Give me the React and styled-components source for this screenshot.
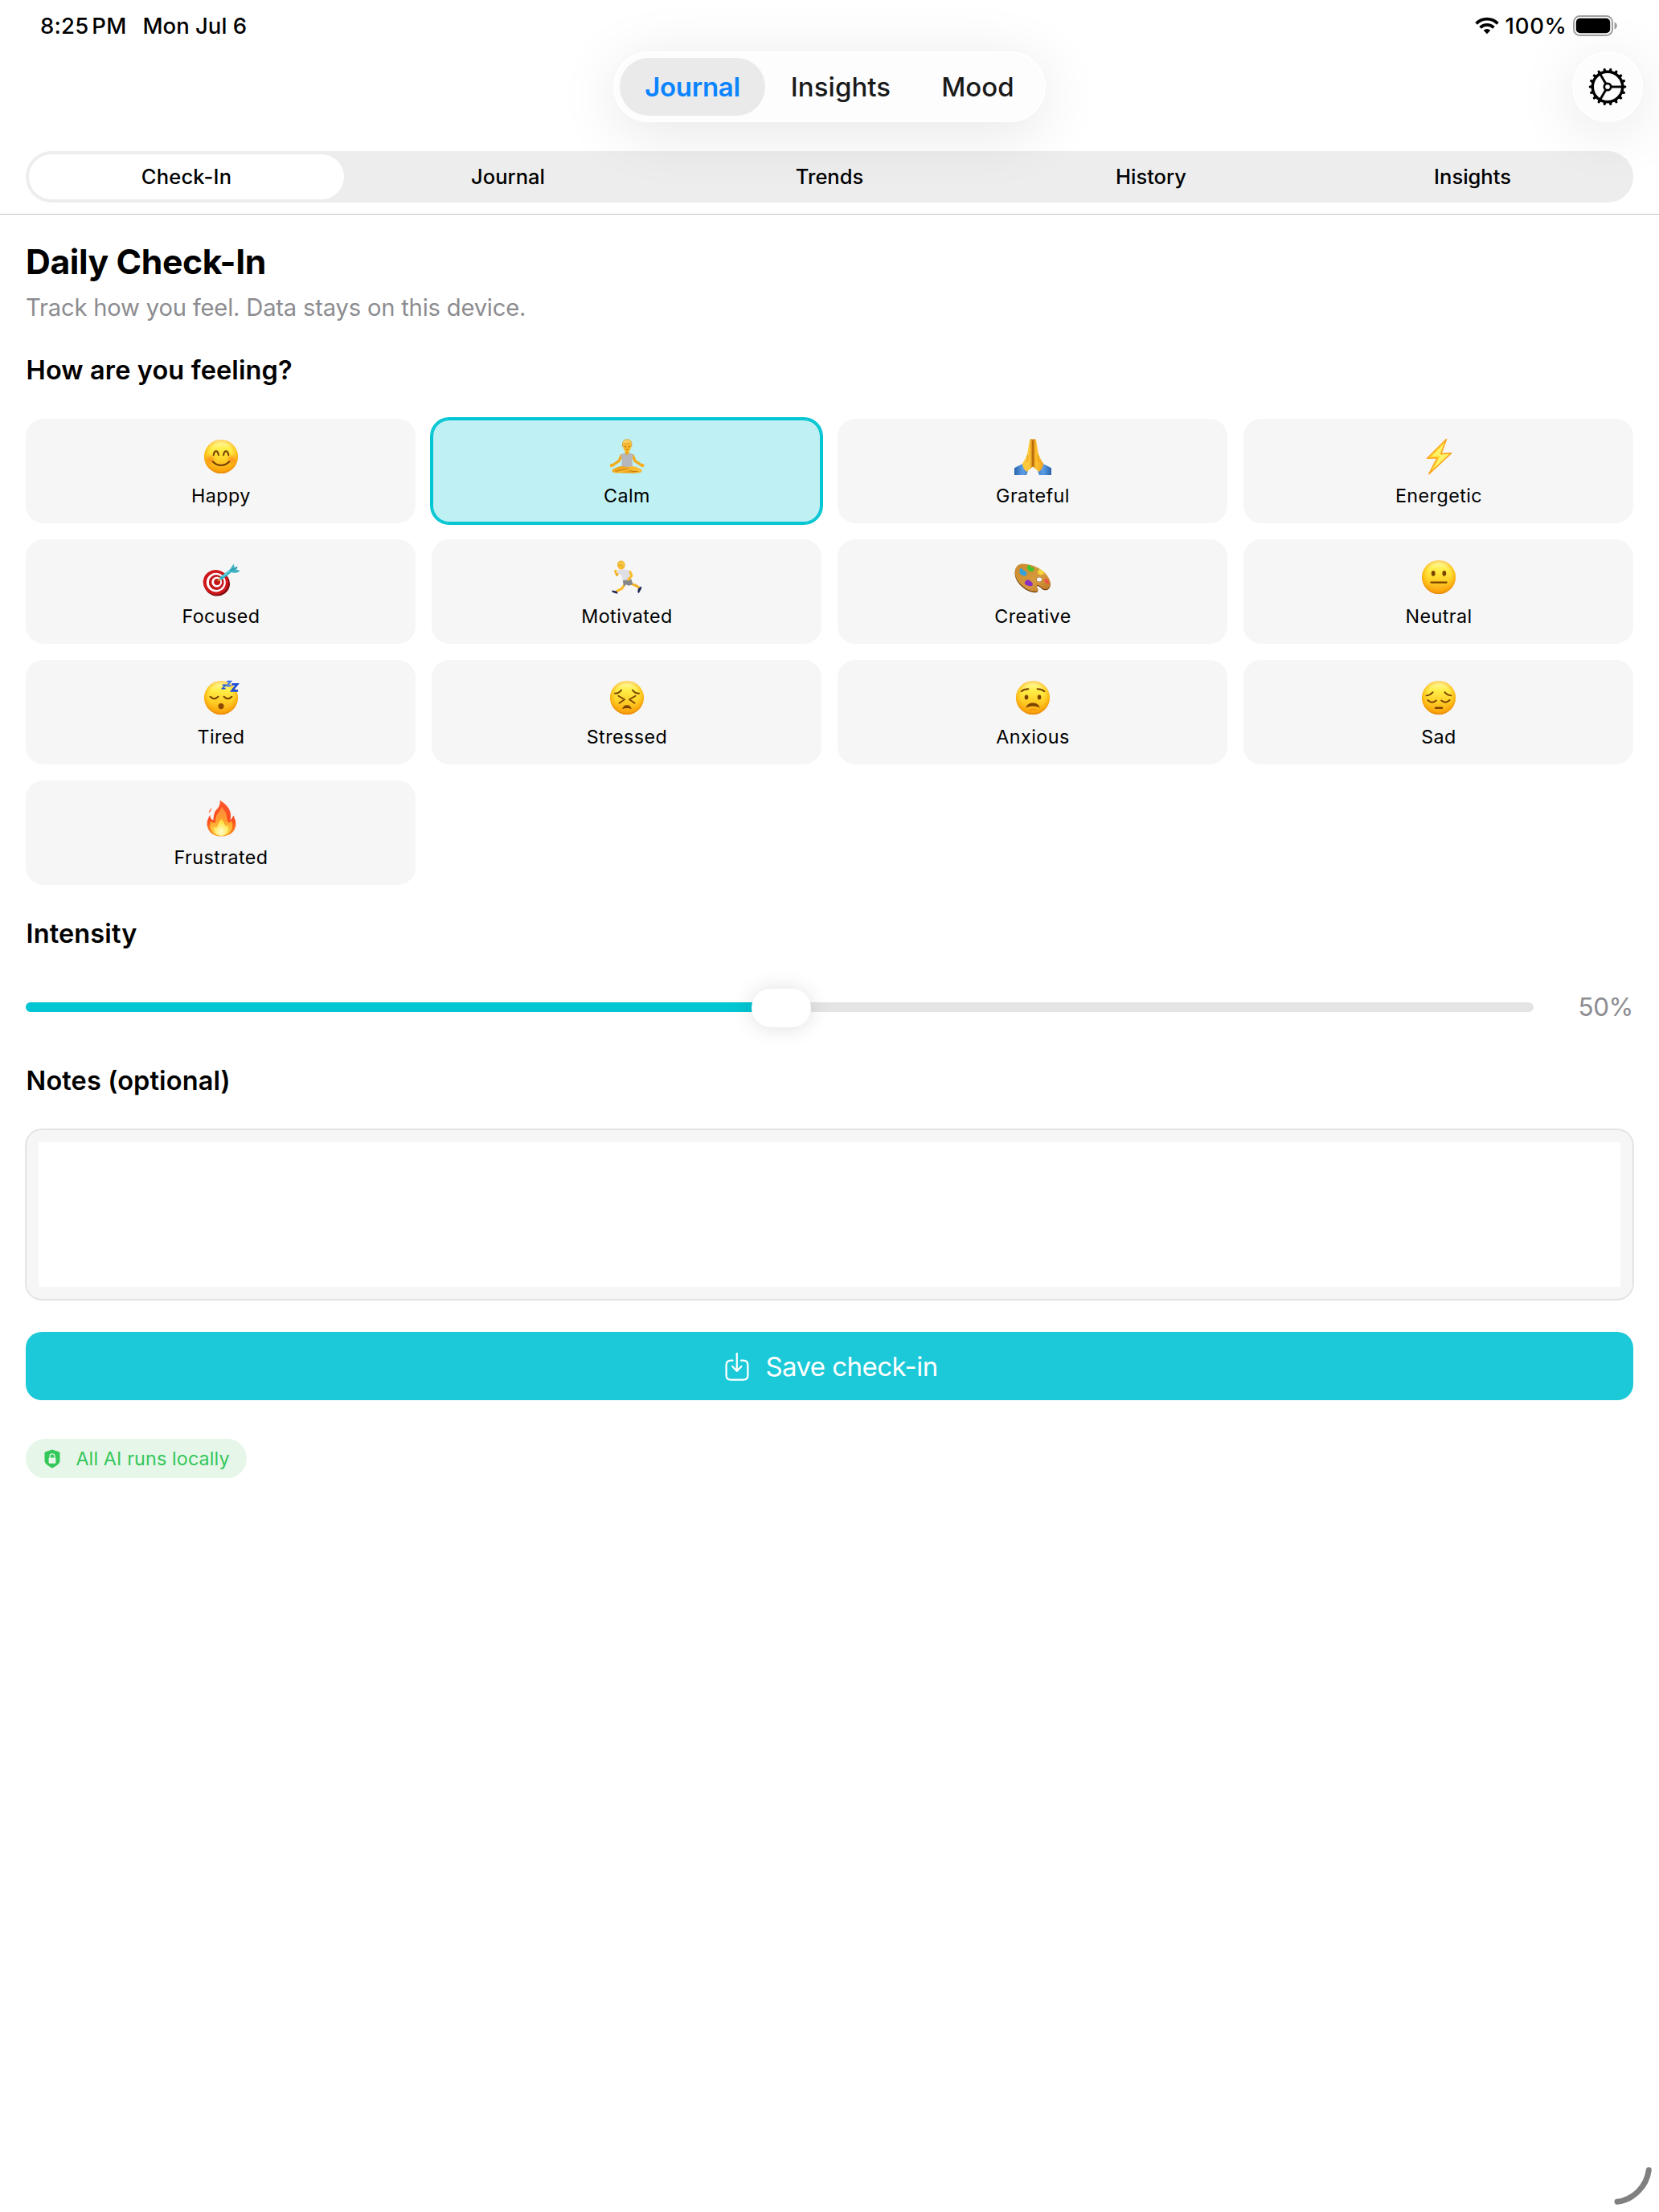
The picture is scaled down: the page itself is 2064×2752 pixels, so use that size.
import React, { useId } from "react";
import styled, { createGlobalStyle, css } from "styled-components";

const teal = "#00c5d2";
const ink = "#000";
const muted = "#8c8c90";
const card = "#f6f6f6";

const GlobalStyle = createGlobalStyle`
  *, *::before, *::after { box-sizing: border-box; }
  body { margin: 0; background: #fff; }
  button { font: inherit; border: 0; padding: 0; background: none; color: inherit; }
`;

const Screen = styled.div`
  position: relative;
  width: 2064px;
  height: 2752px;
  overflow: hidden;
  background: #fff;
  color: ${ink};
  font-family: Inter, "Liberation Sans", sans-serif;
  white-space: nowrap;
`;

const StatusBar = styled.div`
  display: flex;
  justify-content: space-between;
  height: 64px;
  padding: 0 52px 0 50px;
  font-size: 27.5px;
  font-weight: 480;
  line-height: 64px;
`;

const StatusGroup = styled.div`
  display: flex;
  align-items: center;
  gap: ${(p) => p.$gap}px;
`;

const Clock = styled.span`
  letter-spacing: 0.2px;
  word-spacing: -3.6px;
`;

const Percent = styled.span`
  letter-spacing: 0.7px;
`;

const NavBar = styled.nav`
  position: relative;
  z-index: 1;
  display: grid;
  grid-template-columns: 1fr auto 1fr;
  height: 88px;
  padding: 0 20px;
`;

const glass = css`
  background: #fdfdfd;
  box-shadow: inset 0 0 0 2px #fff, 0 12px 76px rgba(0, 0, 0, 0.1);
`;

const TabPill = styled.div`
  grid-column: 2;
  display: flex;
  width: 538px;
  padding: 8px;
  border-radius: 44px;
  ${glass}
`;

const Tab = styled.button`
  width: ${(p) => p.$width}px;
  height: 72px;
  border-radius: 36px;
  font-size: 33px;
  font-weight: ${(p) => (p.$active ? 580 : 480)};
  letter-spacing: ${(p) => (p.$active ? "-0.3px" : "0.05px")};
  line-height: 72px;
  color: ${(p) => (p.$active ? "#0a84ff" : "#1a1a1a")};
  background: ${(p) => (p.$active ? "#eaeaea" : "transparent")};
`;

const GearButton = styled.button`
  justify-self: end;
  display: flex;
  align-items: center;
  justify-content: center;
  width: 88px;
  height: 88px;
  border-radius: 50%;
  ${glass}
`;

const SegmentBar = styled.div`
  padding: 36px 32px 14px;
  border-bottom: 1px solid #c4c4c6;
`;

const Segments = styled.div`
  display: grid;
  grid-template-columns: repeat(5, 1fr);
  height: 64px;
  border-radius: 32px;
  background: #ededed;
`;

const Segment = styled.button`
  margin: 4px;
  border-radius: 28px;
  font-size: 25.5px;
  font-weight: ${(p) => (p.$active ? 550 : 470)};
  letter-spacing: ${(p) => (p.$active ? "0.2px" : "0")};
  line-height: 56px;
  background: ${(p) => (p.$active ? "#fff" : "transparent")};
`;

const Content = styled.main`
  display: flex;
  flex-direction: column;
  padding: 32px 32px 0;
`;

const Title = styled.h1`
  margin: 0;
  font-size: 42.7px;
  font-weight: 700;
  letter-spacing: -0.4px;
  line-height: 53px;
`;

const Subtitle = styled.p`
  margin: 12px 0 0;
  font-size: 29.2px;
  letter-spacing: -0.2px;
  line-height: 37px;
  color: ${muted};
`;

const Heading = styled.h2`
  margin: ${(p) => p.$top}px 0 0;
  padding-left: 0.6px;
  font-size: 32.5px;
  font-weight: 580;
  letter-spacing: 0.12px;
  line-height: 38px;
`;

const MoodGrid = styled.div`
  display: grid;
  grid-template-columns: repeat(4, 1fr);
  gap: 20px;
  margin-top: 41px;
`;

const MoodCard = styled.button`
  display: flex;
  flex-direction: column;
  align-items: center;
  gap: 10px;
  height: 130px;
  padding-top: 23px;
  border-radius: 22px;
  background: ${(p) => (p.$selected ? "#bff0f4" : card)};
  box-shadow: ${(p) =>
    p.$selected ? `0 0 0 2px ${teal}, inset 0 0 0 2px ${teal}` : "none"};
`;

const MoodLabel = styled.span`
  padding-left: 1px;
  font-size: 23.3px;
  letter-spacing: 0.45px;
  line-height: 30px;
`;

const SliderRow = styled.div`
  display: flex;
  align-items: center;
  justify-content: space-between;
  height: 48px;
  margin-top: 48px;
`;

const Track = styled.div`
  position: relative;
  width: 1876px;
  height: 12px;
  border-radius: 6px;
  background: #e4e4e5;
`;

const TrackFill = styled.div`
  height: 12px;
  border-radius: 6px;
  background: ${teal};
`;

const Thumb = styled.div`
  position: absolute;
  top: -17px;
  width: 74px;
  height: 48px;
  border-radius: 24px;
  background: #fff;
  box-shadow: 0 1px 26px rgba(0, 0, 0, 0.13);
`;

const SliderValue = styled.span`
  font-size: 31.4px;
  letter-spacing: -0.4px;
  line-height: 48px;
  color: ${muted};
`;

const NotesBox = styled.div`
  height: 212px;
  margin-top: 41px;
  padding: 16px;
  border-radius: 20px;
  background: ${card};
  box-shadow: 0 0 0 1px #e6e6e7, inset 0 0 0 1px #e0e0e1;
`;

const NotesInput = styled.textarea`
  display: block;
  width: 100%;
  height: 100%;
  border: 0;
  padding: 16px;
  resize: none;
  background: #fff;
  font: inherit;
`;

const SaveButton = styled.button`
  display: flex;
  align-items: center;
  justify-content: center;
  gap: 20px;
  height: 85px;
  margin-top: 40px;
  padding: 1px 0 0 5px;
  border-radius: 20px;
  background: #1cc9d8;
  color: #fff;
  font-size: 33px;
  letter-spacing: -0.55px;
`;

const Badge = styled.div`
  display: flex;
  align-items: center;
  gap: 19.4px;
  width: 275px;
  height: 49px;
  margin-top: 48px;
  padding-left: 23px;
  border-radius: 25px;
  background: #e6f6e9;
  color: #34c759;
  font-size: 23.3px;
  letter-spacing: 0.14px;
`;

const CornerMark = styled.svg`
  position: absolute;
  right: 6px;
  bottom: 6px;
`;

/* ---------- interface icons ---------- */

const WifiIcon = () => (
  <svg width="30" height="22" viewBox="0 0 30 22" fill="none" stroke="#000">
    <path d="M1.6 8.4A18.6 18.6 0 0 1 28.4 8.4" strokeWidth="3.8" />
    <path d="M6.6 13.4A11.8 11.8 0 0 1 23.4 13.4" strokeWidth="3.8" />
    <path d="M15 21.2L10.7 16.8A6.2 6.2 0 0 1 19.3 16.8Z" fill="#000" stroke="none" />
  </svg>
);

const BatteryIcon = () => (
  <svg width="55" height="26" viewBox="0 0 55 26">
    <rect x="1" y="1" width="48" height="24" rx="7.5" fill="none" stroke="#a0a0a0" strokeWidth="2" />
    <rect x="3.8" y="3.8" width="42.4" height="18.4" rx="5" fill="#000" />
    <path d="M51.5 8.6Q54.8 9.8 54.8 13T51.5 17.4Z" fill="#a0a0a0" />
  </svg>
);

const GearIcon = () => (
  <svg width="50" height="50" viewBox="-25 -25 50 50" fill="none" stroke="#000">
    {Array.from({ length: 18 }, (_, i) => (
      <path key={i} d="M18.5 -2.3L22.9 -1.3Q23.7 0 22.9 1.3L18.5 2.3Z" fill="#000" stroke="none" transform={`rotate(${i * 20})`} />
    ))}
    <circle r="18.7" strokeWidth="3.4" />
    <circle r="4.2" strokeWidth="2.7" />
    {[0, 120, 240].map((a) => (
      <path key={a} d="M4.8 0H18" strokeWidth="2.9" transform={`rotate(${a})`} />
    ))}
  </svg>
);

const SaveIcon = () => (
  <svg width="30" height="36" viewBox="0 0 30 36" fill="none" stroke="#fff" strokeWidth="2.3" strokeLinecap="round">
    <path d="M9.5 10.6H7.2Q1.6 10.6 1.6 16.2V29Q1.6 34.6 7.2 34.6H22.8Q28.4 34.6 28.4 29V16.2Q28.4 10.6 22.8 10.6H20" />
    <path d="M14.8 1.8V23" />
    <path d="M9.2 18L14.8 23.8L20.4 18" strokeLinejoin="round" />
  </svg>
);

const ShieldIcon = () => (
  <svg width="20" height="24" viewBox="0 0 20 24">
    <path d="M10 0.4L18.4 3.3Q19.5 3.7 19.5 4.9V14.4Q19.5 18.6 10 23.6Q0.5 18.6 0.5 14.4V4.9Q0.5 3.7 1.6 3.3Z" fill="#34c759" />
    <rect x="5.6" y="10.4" width="8.8" height="7.3" rx="1.2" fill="#e6f6e9" />
    <path d="M7.1 10.8V8.6Q7.1 5.8 10 5.8T12.9 8.6V10.8" fill="none" stroke="#e6f6e9" strokeWidth="1.3" />
  </svg>
);

/* ---------- mood drawings, all centred on 0,0 ---------- */

const Art = styled.svg`
  width: 48px;
  height: 48px;
  overflow: visible;
`;

const brown = "#7a4300";

function Face({ children }) {
  const id = useId();
  return (
    <Art viewBox="-24 -24 48 48" fill="none" strokeLinecap="round" strokeLinejoin="round">
      <defs>
        <linearGradient id={`${id}b`} x1="0" y1="0" x2="0" y2="1">
          <stop offset="0" stopColor="#fffbb8" />
          <stop offset="0.28" stopColor="#ffee48" />
          <stop offset="0.6" stopColor="#ffd028" />
          <stop offset="1" stopColor="#f99e10" />
        </linearGradient>
        <radialGradient id={`${id}r`} cx="0.5" cy="0.46" r="0.54">
          <stop offset="0.62" stopColor="#ffb000" stopOpacity="0" />
          <stop offset="0.88" stopColor="#fba005" stopOpacity="0.6" />
          <stop offset="1" stopColor="#e0800a" stopOpacity="0.92" />
        </radialGradient>
      </defs>
      <circle r="21" fill={`url(#${id}b)`} />
      <circle r="21" fill={`url(#${id}r)`} />
      {children}
    </Art>
  );
}

const Happy = () => {
  const id = useId();
  return (
    <Face>
      <defs>
        <radialGradient id={id}>
          <stop offset="0" stopColor="#ff7a1a" stopOpacity="0.75" />
          <stop offset="1" stopColor="#ff8a1a" stopOpacity="0" />
        </radialGradient>
      </defs>
      <circle cx="-13.4" cy="4" r="7.6" fill={`url(#${id})`} />
      <circle cx="13.4" cy="4" r="7.6" fill={`url(#${id})`} />
      <path d="M-9.3 -1.8Q-8.6 -6.6 -6.2 -6.6T-3.1 -1.8M3.1 -1.8Q3.8 -6.6 6.2 -6.6T9.3 -1.8" stroke={brown} strokeWidth="2.1" />
      <path d="M-10.4 6.2Q-6 10.8 0 10.8T10.4 6.2" stroke={brown} strokeWidth="2.2" />
    </Face>
  );
};

const Neutral = () => (
  <Face>
    <ellipse cx="-6.8" cy="-4.7" rx="2.4" ry="3.4" fill={brown} />
    <ellipse cx="6.8" cy="-4.7" rx="2.4" ry="3.4" fill={brown} />
    <path d="M-9.6 6.6H9.6" stroke={brown} strokeWidth="2.2" />
  </Face>
);

const Tired = () => (
  <Face>
    <path d="M-13.4 -1.2Q-8.5 3.6 -3.6 -1.2M3.6 -1.2Q8.5 3.6 13.4 -1.2" stroke={brown} strokeWidth="2" />
    <ellipse cy="10.6" rx="3.5" ry="3.6" fill="#8a4b00" />
    <g stroke="#1c4fd6" strokeLinecap="butt" strokeLinejoin="miter">
      <path d="M1.6 -15.8H5.4L1.6 -11.4H5.6" strokeWidth="1.6" />
      <path d="M7.3 -20.2H12L7.3 -14.8H12.4" strokeWidth="2" stroke="#3a74e8" />
      <path d="M13.4 -16.6H20.2L13.6 -8.6H21" strokeWidth="2.6" />
    </g>
  </Face>
);

const Stressed = () => (
  <Face>
    <g stroke={brown} strokeWidth="1.9">
      <path d="M-15 -5.2Q-9.6 -5.6 -7 -9.4M15 -5.2Q9.6 -5.6 7 -9.4" />
      <path d="M-10.6 -2.2L-3 2.2L-9.6 6.8M10.6 -2.2L3 2.2L9.6 6.8" />
    </g>
    <path d="M-5.8 14.2Q-4.4 9.2 0 9.2T5.8 14.2Q0 11.6 -5.8 14.2Z" fill={brown} />
  </Face>
);

const Anxious = () => (
  <Face>
    <path d="M-14.4 -7.8Q-11 -11 -5.6 -10.8M14.4 -7.8Q11 -11 5.6 -10.8" stroke={brown} strokeWidth="1.9" />
    <ellipse cx="-8" cy="-0.4" rx="2.3" ry="3" fill={brown} />
    <ellipse cx="8" cy="-0.4" rx="2.3" ry="3" fill={brown} />
    <path d="M-8.8 12.4Q-6.6 6.6 0 6.6T8.8 12.4Q0 8.4 -8.8 12.4Z" fill={brown} />
    <path d="M-4 15.4Q0 13.4 4 15.4" stroke="#f0920c" strokeWidth="1.4" />
  </Face>
);

const Sad = () => (
  <Face>
    <g stroke={brown} strokeWidth="1.9">
      <path d="M-15.4 -2.6Q-10.4 -3 -7.4 -6.8M15.4 -2.6Q10.4 -3 7.4 -6.8" />
      <path d="M-13.6 3Q-8.4 8 -3.2 3.6M13.6 3Q8.4 8 3.2 3.6" />
      <path d="M-4 12.8H4" strokeWidth="2.4" />
    </g>
  </Face>
);

const Calm = () => (
  <Art viewBox="-24 -24 48 48" fill="none" strokeLinecap="round" strokeLinejoin="round">
    <path d="M-2.4 -8V-2H2.6V-8Z" fill="#efa61c" />
    <path d="M-7 -1.4L-9.8 5.4L-17.6 10.6M7.2 -1.4L10 5.4L17.8 10.6" stroke="#f2ab1c" strokeWidth="3.3" />
    <circle cx="-19" cy="11" r="2.3" fill="#f5b024" />
    <circle cx="19.2" cy="11" r="2.3" fill="#f5b024" />
    <path d="M-7.6 -2.6Q-4 -4.6 -3 -4Q0 -0.4 3.2 -4Q4.4 -4.6 7.8 -2.6L6.4 5.4L7 13H-6.8L-6.2 5.4Z" fill="#b6b7bd" />
    <path d="M-17.6 19.4Q-20 16.6 -15 14.4Q-8 11.2 -3 12.4L15 17Q19.6 18.6 16.4 20Q2 22 -17.6 19.4Z" fill="#f0a51a" />
    <path d="M17.8 19.4Q20.2 16.6 15.2 14.4Q8 11.2 3.2 12.4L-15 18Q-18.6 20 -15 20.4Q-8 21.6 0 17.6Q8 20.6 17.8 19.4Z" fill="#f8ba30" />
    <path d="M-14 18.4Q-4 16.6 2 14.6M3 17.6Q8 19 13 18.6" stroke="#c0740a" strokeWidth="1" />
    <ellipse cx="0.2" cy="-12.4" rx="5" ry="6.6" fill="#fbbb2c" />
    <path d="M-5.4 -12.4Q-6.8 -21 0.2 -21.4Q7 -21.2 5.8 -12.4Q4.4 -16.8 2.4 -17.2Q-1 -15.4 -3.8 -16Q-5 -15 -5.4 -12.4Z" fill="#f7cf62" stroke="#d8951a" strokeWidth="0.7" />
    <path d="M-3 -12.2H-1.2M1.6 -12.2H3.4M-1.2 -8.8Q0.2 -8 1.6 -8.8" stroke="#a85f0c" strokeWidth="0.9" />
  </Art>
);

const Grateful = () => {
  const id = useId();
  return (
    <Art viewBox="-24 -24 48 48">
      <defs>
        <linearGradient id={`${id}h`} x1="0" y1="0" x2="1" y2="0">
          <stop offset="0" stopColor="#ffc83c" />
          <stop offset="0.35" stopColor="#ffc93a" />
          <stop offset="0.5" stopColor="#c8780e" />
          <stop offset="0.65" stopColor="#ffc22e" />
          <stop offset="1" stopColor="#f0a01a" />
        </linearGradient>
        <linearGradient id={`${id}l`} x1="0" y1="0" x2="1" y2="0">
          <stop offset="0" stopColor="#2a64ab" />
          <stop offset="0.6" stopColor="#5b9de6" />
          <stop offset="1" stopColor="#4280c8" />
        </linearGradient>
      </defs>
      <path d="M-13.4 9.2L-23 14.2V23H-7.8L-5.8 17Z" fill={`url(#${id}l)`} />
      <g transform="scale(-1 1)">
        <path d="M-13.4 9.2L-23 14.2V23H-7.8L-5.8 17Z" fill={`url(#${id}l)`} />
      </g>
      <path d="M-0.4 -21.4Q-3.6 -23.4 -4.2 -19.4L-6.8 -3.8Q-9.6 4.4 -13.2 8.8Q-12.4 15.6 -7.6 19L0 12.6L7.6 19Q12.4 15.6 13.2 8.8Q9.6 4.4 6.8 -3.8L4.2 -19.4Q3.6 -23.4 0.4 -21.4Z" fill={`url(#${id}h)`} />
      <path d="M-6.6 -2Q-5 3 -7.6 7M6.6 -2Q5 3 7.6 7" fill="none" stroke="#e2920f" strokeWidth="0.9" />
      <path d="M0 -20V12.4" stroke="#a85e08" strokeWidth="1.1" />
    </Art>
  );
};

const Energetic = () => (
  <Art viewBox="-24 -24 48 48">
    <path d="M9.4 -21.4L-14.4 2.2L-1.8 1.6L-12.2 21.6L15.4 -4.2L2.8 -3.4Z" fill="#fff36a" stroke="#fca51c" strokeWidth="1.6" strokeLinejoin="round" />
    <path d="M5.6 -15.8L-10.4 0.6L0.6 0L-7 14.6" fill="none" stroke="#ffd42e" strokeWidth="1.2" />
  </Art>
);

const Focused = () => (
  <Art viewBox="-24 -24 48 48" fill="none">
    <g transform="rotate(8 -6.4 6.8)">
      <ellipse cx="-5" cy="7.8" rx="16.2" ry="15.6" fill="#7d0c11" />
      <ellipse cx="-6.6" cy="6.4" rx="15.8" ry="15.4" fill="#cf171c" />
      <ellipse cx="-6.2" cy="6.6" rx="12" ry="11.8" fill="#fff" />
      <ellipse cx="-5.8" cy="6.4" rx="9.4" ry="9.4" fill="#c4171c" />
      <ellipse cx="-5.4" cy="6" rx="6.4" ry="6.4" fill="#fff" />
      <ellipse cx="-5" cy="5.8" rx="4" ry="4" fill="#c4171c" />
    </g>
    <path d="M-3.6 4.4L2 0" stroke="#d9a92c" strokeWidth="1.8" strokeLinecap="round" />
    <path d="M0.4 1.2L13 -8.6" stroke="#2fb4c4" strokeWidth="4" strokeLinecap="round" />
    <path d="M2 -0.6L12.4 -9.2" stroke="#7fe0e8" strokeWidth="1.2" strokeLinecap="round" />
    <path d="M10.4 -8.4L15.8 -16.4Q16.8 -13.6 16.4 -11.2L20.6 -13.6Q20.2 -10.6 19 -9.2L23.6 -8.2Q20.6 -4.2 14.2 -5.6Z" fill="#3fb2c2" />
    <path d="M12 -8.2L19.4 -12.6" stroke="#19859a" strokeWidth="0.9" />
  </Art>
);

const Motivated = () => (
  <Art viewBox="-24 -24 48 48" fill="none" strokeLinecap="round" strokeLinejoin="round">
    <path d="M-10.4 -5.4L-12.6 -2.2L-14.2 -6.4" stroke="#f3ad20" strokeWidth="2.4" />
    <circle cx="-14.2" cy="-7.4" r="1.9" fill="#fbbd30" />
    <path d="M5 8.4Q10 9.4 14.4 12.4" stroke="#f3ad20" strokeWidth="3" />
    <path d="M14 14.4L17.4 11.4L18.4 13.2Q16 18.4 14.6 20Q12.6 19.6 14 14.4Z" fill="#1a2458" />
    <path d="M-2.8 9L-6.4 14.4L-12.4 17.4" stroke="#fbbb2c" strokeWidth="3" />
    <path d="M-18.6 16.4L-12.4 17.8L-11.4 20.4Q-14 20.8 -18.4 18.6Z" fill="#1a2458" />
    <path d="M-5.4 3L4.8 1L7.4 8.4L2.6 10.8L-1 9.2L-4 11.4Z" fill="#85868c" />
    <path d="M-10.8 -9.2Q-6 -10.8 1.4 -8.6Q5.4 -6.6 4.4 -2.4L5 2.4L-5.6 4.6Q-5.4 -1.4 -8 -4L-12 -4.4Z" fill="#dedfe4" />
    <path d="M3.8 -6.6L6 -1.8L1.6 3.2" stroke="#fbbb2c" strokeWidth="2.9" />
    <circle cx="-7.2" cy="-13.8" r="4.2" fill="#fbbb2c" />
    <path d="M-11.4 -14.6Q-12.4 -19.8 -7 -20.2Q-2 -19.6 -2.8 -13.4L-4.4 -11.4L-6.6 -15.4Z" fill="#f5c742" stroke="#dc9c1c" strokeWidth="0.6" />
  </Art>
);

const Creative = () => {
  const id = useId();
  return (
    <Art viewBox="-24 -24 48 48">
      <defs>
        <linearGradient id={id} x1="0" y1="0" x2="1" y2="1">
          <stop offset="0" stopColor="#c98a2c" />
          <stop offset="0.6" stopColor="#d79a3c" />
          <stop offset="1" stopColor="#b87322" />
        </linearGradient>
      </defs>
      <path transform="translate(-0.2 1.2)" d="M-12 -16.5C-20 -17 -23 -10 -22 -4C-21 6 -8 18 3 18C7 18 7.4 15 5 12.6C3.6 9 8 9.6 11 13C15 17.2 22 15 22 8C21 -4 5 -16 -12 -16.5Z" fill="#6b3a0c" />
      <path fillRule="evenodd" d="M-12 -16.5C-20 -17 -23 -10 -22 -4C-21 6 -8 18 3 18C7 18 7.4 15 5 12.6C3.6 9 8 9.6 11 13C15 17.2 22 15 22 8C21 -4 5 -16 -12 -16.5ZM8 0A3.4 3 0 1 1 8 6A3.4 3 0 1 1 8 0Z" fill={`url(#${id})`} />
      <ellipse cx="8" cy="3" rx="3.2" ry="2.8" fill={card} />
      <path d="M-16.4 -10Q-14 -12.6 -12 -8.6Q-7.4 -8 -7.6 -3.6Q-9.6 0 -13.4 -2.4Q-17.4 -4 -16.4 -10Z" fill="#31a2dd" />
      <path d="M-6.6 -14Q-4 -16.6 -2.4 -12.6Q2.4 -12.4 1.2 -8.6Q-1.4 -5.8 -5 -8Q-8 -10.4 -6.6 -14Z" fill="#3fc42c" />
      <path d="M6.6 -8Q8 -11.4 11 -8.6Q15.4 -7.4 13.4 -4Q9.6 -1.6 7 -4Q5 -5.6 6.6 -8Z" fill="#f6d43a" />
      <path d="M14 3.4Q15.4 0.6 18 3.2Q21.6 6 19.4 8.6Q15.4 8.6 14 3.4Z" fill="#f0524a" />
      <path d="M-9.6 5.6Q-6.6 1.4 -4 4.4Q1 6.6 -0.4 10.4Q-3.4 12.6 -8 9.8Q-11.4 9 -9.6 5.6Z" fill="#8730c2" />
    </Art>
  );
};

const Frustrated = () => {
  const id = useId();
  return (
    <Art viewBox="-24 -24 48 48">
      <defs>
        <linearGradient id={`${id}o`} x1="0" y1="0" x2="0" y2="1">
          <stop offset="0" stopColor="#ff5a2e" />
          <stop offset="0.55" stopColor="#fb4a20" />
          <stop offset="1" stopColor="#ff9a1c" />
        </linearGradient>
        <linearGradient id={`${id}m`} x1="0" y1="0" x2="0" y2="1">
          <stop offset="0" stopColor="#ff8a3c" />
          <stop offset="0.5" stopColor="#ff9f2e" />
          <stop offset="1" stopColor="#ffe04a" />
        </linearGradient>
        <radialGradient id={`${id}c`} cx="0.5" cy="0.75" r="0.6">
          <stop offset="0" stopColor="#fffbd0" />
          <stop offset="1" stopColor="#ffe23e" />
        </radialGradient>
      </defs>
      <path d="M-1.4 -22.6Q11 -14.6 12 -5.4Q12.4 0 11 2.4Q14 0.6 15.2 -3.4Q19 3 18.2 9Q16.4 21.6 0.4 22.6Q-15.6 21.8 -17.4 8Q-17.8 2.4 -13.8 -4Q-13.2 1.4 -9.6 2.4Q-9.4 -7.6 -5 -11.6Q-0.6 -16 -1.4 -22.6Z" fill={`url(#${id}o)`} />
      <path d="M-15.4 -6.4Q-15 -10.2 -11.2 -12.4Q-12.6 -8.4 -15.4 -6.4Z" fill="#ff5a2e" />
      <path d="M0.4 -14Q7 -8 7.4 0Q7.6 4 9.6 5.4Q12.4 5 13.4 2.8Q15.6 9.6 12.4 15Q8.4 21.4 0.4 21.8Q-10.4 21.4 -13.4 12.4Q-14.6 7.4 -12.6 3.4Q-10.4 6.6 -7 5.4Q-7.4 -3.4 -2.8 -7.6Q0 -10.6 0.4 -14Z" fill={`url(#${id}m)`} />
      <path d="M0.6 1Q4.4 5.4 5.4 9.8Q8 10.2 9 8.6Q10.4 20.8 0.6 22Q-9.6 21.4 -8.8 10.6Q-7 12.4 -4.6 11Q-3.6 4.6 0.6 1Z" fill={`url(#${id}c)`} />
    </Art>
  );
};

const navTabs = [
  { label: "Journal", width: 181, active: true },
  { label: "Insights", width: 188 },
  { label: "Mood", width: 153 },
];

const segments = ["Check-In", "Journal", "Trends", "History", "Insights"];

const moods = [
  ["Happy", Happy],
  ["Calm", Calm],
  ["Grateful", Grateful],
  ["Energetic", Energetic],
  ["Focused", Focused],
  ["Motivated", Motivated],
  ["Creative", Creative],
  ["Neutral", Neutral],
  ["Tired", Tired],
  ["Stressed", Stressed],
  ["Anxious", Anxious],
  ["Sad", Sad],
  ["Frustrated", Frustrated],
];

export default function App() {
  const intensity = 50;
  const center = 38.5 + ((1876 - 74) * intensity) / 100;

  return (
    <Screen>
      <GlobalStyle />
      <StatusBar>
        <StatusGroup $gap={20}>
          <Clock>8:25 PM</Clock>
          <span>Mon Jul 6</span>
        </StatusGroup>
        <StatusGroup $gap={7.4}>
          <WifiIcon />
          <Percent>100%</Percent>
          <BatteryIcon />
        </StatusGroup>
      </StatusBar>

      <NavBar>
        <TabPill>
          {navTabs.map((t) => (
            <Tab key={t.label} $width={t.width} $active={t.active}>
              {t.label}
            </Tab>
          ))}
        </TabPill>
        <GearButton aria-label="Settings">
          <GearIcon />
        </GearButton>
      </NavBar>

      <SegmentBar>
        <Segments>
          {segments.map((s, i) => (
            <Segment key={s} $active={i === 0}>
              {s}
            </Segment>
          ))}
        </Segments>
      </SegmentBar>

      <Content>
        <Title>Daily Check-In</Title>
        <Subtitle>Track how you feel. Data stays on this device.</Subtitle>

        <Heading $top={41}>How are you feeling?</Heading>
        <MoodGrid>
          {moods.map(([label, Drawing]) => (
            <MoodCard key={label} $selected={label === "Calm"}>
              <Drawing />
              <MoodLabel>{label}</MoodLabel>
            </MoodCard>
          ))}
        </MoodGrid>

        <Heading $top={42}>Intensity</Heading>
        <SliderRow>
          <Track>
            <TrackFill style={{ width: center }} />
            <Thumb style={{ left: center - 37 }} />
          </Track>
          <SliderValue>{intensity}%</SliderValue>
        </SliderRow>

        <Heading $top={49}>Notes (optional)</Heading>
        <NotesBox>
          <NotesInput />
        </NotesBox>

        <SaveButton>
          <SaveIcon />
          <span>Save check-in</span>
        </SaveButton>

        <Badge>
          <ShieldIcon />
          <span>All AI runs locally</span>
        </Badge>
      </Content>

      <CornerMark width="50" height="50" viewBox="2008 2696 50 50" fill="none">
        <path d="M2012 2739.3A46 46 0 0 0 2051.3 2699.7" stroke="#808080" strokeWidth="7" strokeLinecap="round" />
      </CornerMark>
    </Screen>
  );
}
